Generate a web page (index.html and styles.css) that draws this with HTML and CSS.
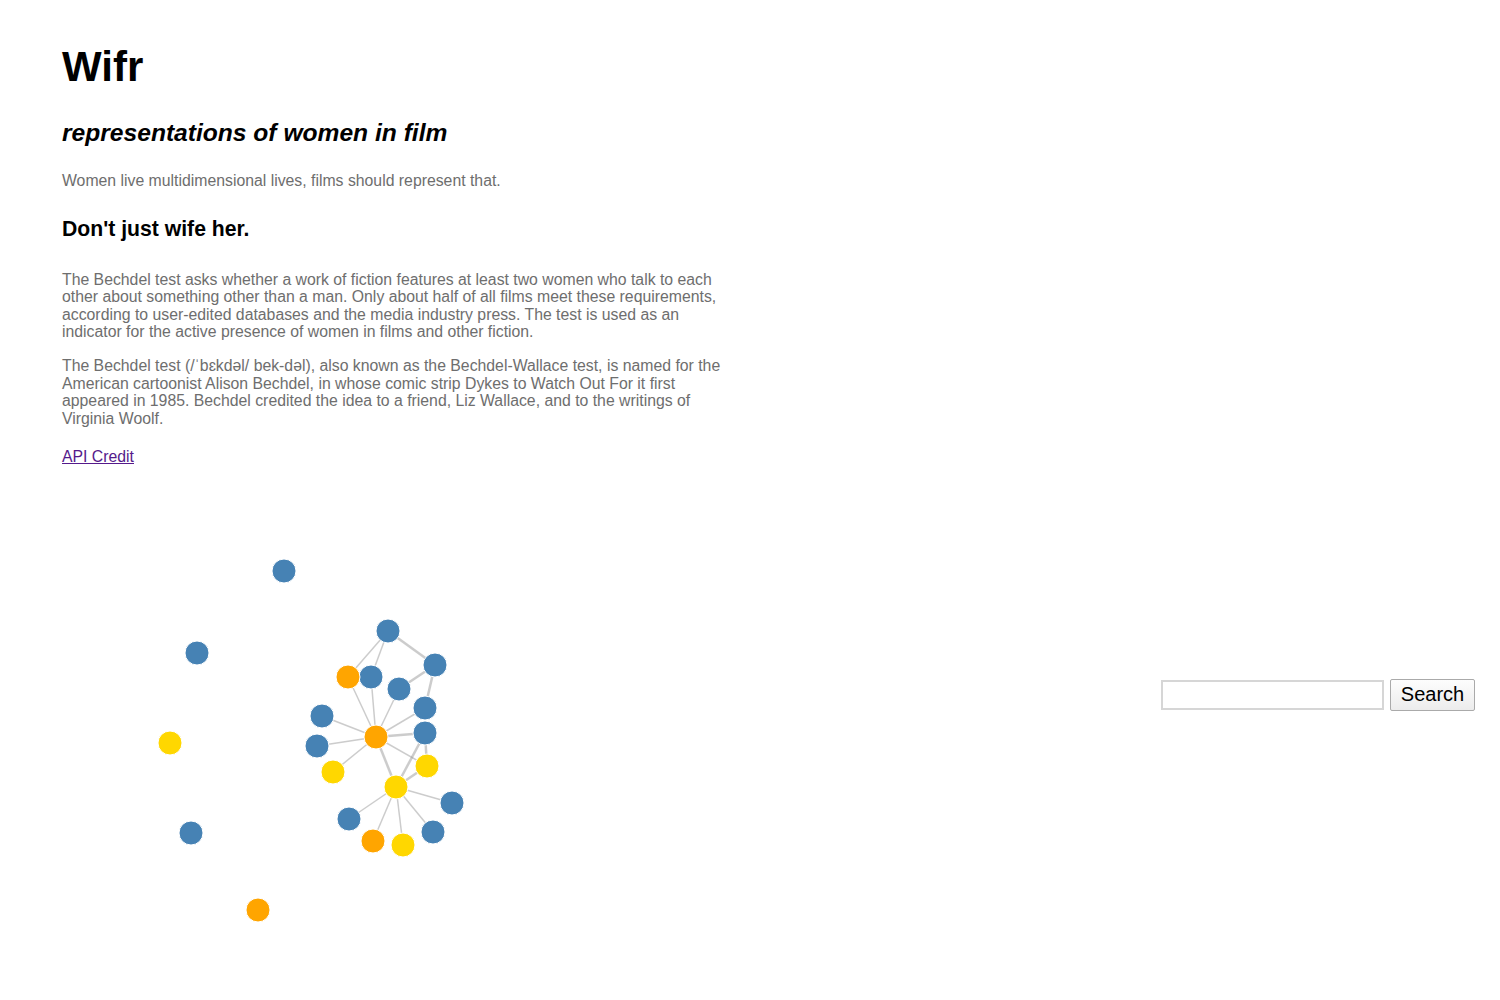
FILE: index.html
```html
<!DOCTYPE html>
<html>
<head>
<meta charset="utf-8">
<title>Wifr</title>
<link rel="stylesheet" href="styles.css">
</head>
<body>
<div class="page">
  <header class="intro">
    <h1 class="title">Wifr</h1>
    <h2 class="subtitle">representations of women in film</h2>
    <p class="lead">Women live multidimensional lives, films should represent that.</p>
    <h3 class="tagline">Don't just wife her.</h3>
    <p class="text">The Bechdel test asks whether a work of fiction features at least two women who talk to each other about something other than a man. Only about half of all films meet these requirements, according to user-edited databases and the media industry press. The test is used as an indicator for the active presence of women in films and other fiction.</p>
    <p class="text">The Bechdel test (/ˈbɛkdəl/ bek-dəl), also known as the Bechdel-Wallace test, is named for the American cartoonist Alison Bechdel, in whose comic strip Dykes to Watch Out For it first appeared in 1985. Bechdel credited the idea to a friend, Liz Wallace, and to the writings of Virginia Woolf.</p>
    <p class="text credit-line"><a class="credit" href="#">API Credit</a></p>
  </header>
  <div class="stage">
    <svg class="graph" width="1095" height="456" viewBox="0 0 1095 456">
      <g class="links">
        <line x1="326" y1="165" x2="286" y2="211" />
        <line x1="326" y1="165" x2="309" y2="211" />
        <line class="thick" x1="326" y1="165" x2="373" y2="199" />
        <line class="thick" x1="373" y1="199" x2="337" y2="223" />
        <line class="thick" x1="373" y1="199" x2="363" y2="242" />
        <line x1="286" y1="211" x2="314" y2="271" />
        <line x1="309" y1="211" x2="314" y2="271" />
        <line x1="337" y1="223" x2="314" y2="271" />
        <line x1="363" y1="242" x2="314" y2="271" />
        <line x1="260" y1="250" x2="314" y2="271" />
        <line class="thick" x1="363" y1="267" x2="314" y2="271" />
        <line x1="255" y1="280" x2="314" y2="271" />
        <line x1="271" y1="306" x2="314" y2="271" />
        <line x1="365" y1="300" x2="314" y2="271" />
        <line class="thick" x1="314" y1="271" x2="334" y2="321" />
        <line class="thick" x1="363" y1="267" x2="334" y2="321" />
        <line class="thick" x1="363" y1="267" x2="365" y2="300" />
        <line class="thick" x1="365" y1="300" x2="334" y2="321" />
        <line x1="334" y1="321" x2="390" y2="337" />
        <line x1="334" y1="321" x2="287" y2="353" />
        <line x1="334" y1="321" x2="371" y2="366" />
        <line x1="334" y1="321" x2="311" y2="375" />
        <line x1="334" y1="321" x2="341" y2="379" />
      </g>
      <g class="nodes">
        <circle class="blue" cx="222" cy="105" r="12" />
        <circle class="blue" cx="135" cy="187" r="12" />
        <circle class="gold" cx="108" cy="277" r="12" />
        <circle class="blue" cx="129" cy="367" r="12" />
        <circle class="orange" cx="196" cy="444" r="12" />
        <circle class="blue" cx="326" cy="165" r="12" />
        <circle class="blue" cx="373" cy="199" r="12" />
        <circle class="blue" cx="309" cy="211" r="12" />
        <circle class="orange" cx="286" cy="211" r="12" />
        <circle class="blue" cx="337" cy="223" r="12" />
        <circle class="blue" cx="363" cy="242" r="12" />
        <circle class="blue" cx="260" cy="250" r="12" />
        <circle class="blue" cx="363" cy="267" r="12" />
        <circle class="blue" cx="255" cy="280" r="12" />
        <circle class="orange" cx="314" cy="271" r="12" />
        <circle class="gold" cx="271" cy="306" r="12" />
        <circle class="gold" cx="365" cy="300" r="12" />
        <circle class="gold" cx="334" cy="321" r="12" />
        <circle class="blue" cx="390" cy="337" r="12" />
        <circle class="blue" cx="287" cy="353" r="12" />
        <circle class="blue" cx="371" cy="366" r="12" />
        <circle class="orange" cx="311" cy="375" r="12" />
        <circle class="gold" cx="341" cy="379" r="12" />
      </g>
    </svg>
    <form class="search" onsubmit="return false">
      <input class="search-input" type="text">
      <button class="search-btn" type="submit">Search</button>
    </form>
  </div>
</div>
</body>
</html>
```

FILE: styles.css
```css
html, body {
  margin: 0;
  padding: 0;
  background: #fff;
}

body {
  font-family: "Liberation Sans", Arial, Helvetica, sans-serif;
  color: #000;
}

.page {
  padding: 43px 0 0 62px;
}

.intro {
  width: 672px;
}

.title {
  font-size: 42px;
  font-weight: bold;
  line-height: 48px;
  margin: 0;
}

.subtitle {
  font-size: 24.6px;
  font-style: italic;
  font-weight: bold;
  line-height: 30px;
  margin: 27px 0 0 0;
}

.lead {
  font-size: 15.8px;
  line-height: 17.6px;
  color: #6e6e6e;
  margin: 24px 0 0 0;
}

.tagline {
  font-size: 21.2px;
  font-weight: bold;
  line-height: 24px;
  margin: 27px 0 0 0;
}

.text {
  font-size: 15.8px;
  line-height: 17.6px;
  color: #6e6e6e;
  margin: 30px 0 0 0;
}

.text + .text {
  margin-top: 16px;
}

.text.credit-line {
  margin-top: 21px;
}

.credit {
  color: #551a8b;
  text-decoration: underline;
}

.stage {
  display: flex;
  align-items: center;
}

.graph {
  display: block;
  flex: none;
  overflow: visible;
}

.links line {
  stroke: #999;
  stroke-opacity: 0.5;
  stroke-width: 1.5px;
}

.links line.thick {
  stroke-width: 2.5px;
}

.nodes circle {
  stroke: #fff;
  stroke-width: 1px;
}

.blue { fill: #4682b4; }
.orange { fill: #ffa500; }
.gold { fill: #ffd700; }

.search {
  display: flex;
  align-items: center;
  gap: 6px;
  margin-left: 4px;
  margin-top: 2px;
}

.search-input {
  width: 219px;
  height: 26px;
  border: 2px solid #d6d6d6;
  padding: 0;
  margin: 0;
  font-size: 16px;
  font-family: "Liberation Sans", Arial, sans-serif;
  box-sizing: content-box;
}

.search-btn {
  width: 85px;
  height: 32px;
  border: 1px solid #aaa;
  border-radius: 2px;
  background: linear-gradient(#fdfdfd, #ececec);
  font-family: "Liberation Sans", Arial, sans-serif;
  font-size: 20px;
  color: #000;
  padding: 0;
  margin: 0;
}
```
